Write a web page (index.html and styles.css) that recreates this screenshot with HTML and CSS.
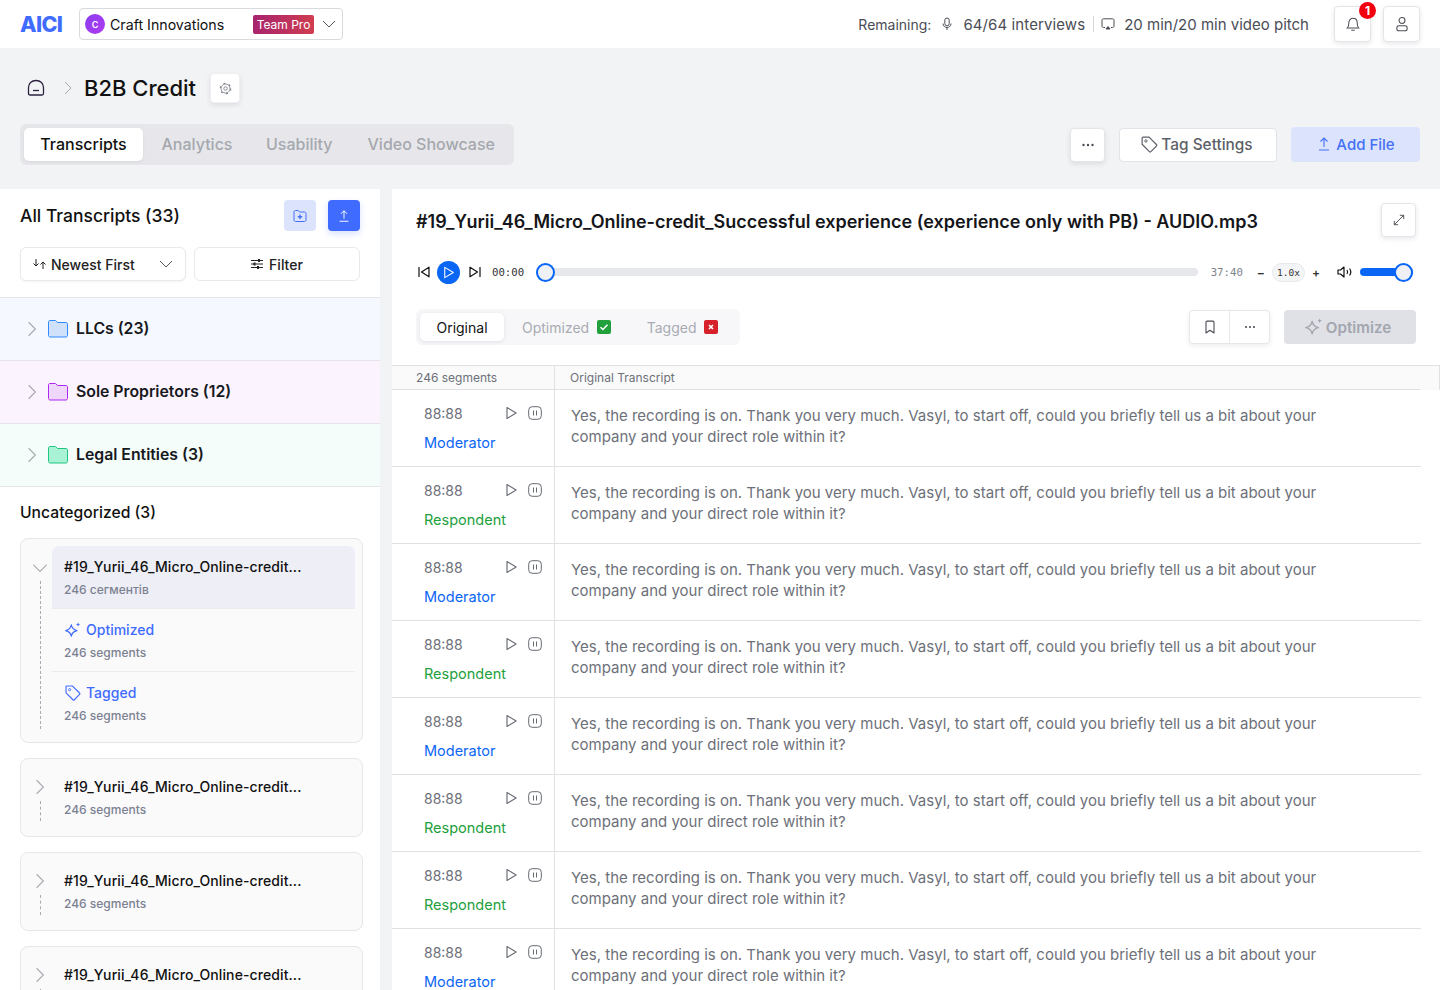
FILE: index.html
```html
<!DOCTYPE html>
<html lang="en">
<head>
    <meta charset="UTF-8">
    <title>B2B Credit - Transcripts</title>
    <link rel="stylesheet" href="styles.css">
</head>
<body>

<svg class="sprite" xmlns="http://www.w3.org/2000/svg">
    <defs>
        <symbol id="i-chev-r" viewBox="0 0 16 16"><path d="M5 2l6 6-6 6" fill="none" stroke="currentColor" stroke-width="1"/></symbol>
        <symbol id="i-chev-d" viewBox="0 0 16 16"><path d="M2 5l6 6 6-6" fill="none" stroke="currentColor" stroke-width="1"/></symbol>
        <symbol id="i-dots" viewBox="0 0 16 16"><circle cx="3.5" cy="8" r="1.2" fill="currentColor"/><circle cx="8" cy="8" r="1.2" fill="currentColor"/><circle cx="12.5" cy="8" r="1.2" fill="currentColor"/></symbol>
        <symbol id="i-tag" viewBox="0 0 16 16"><path d="M1.8 2.6c0-.5.4-.8.8-.8h5l6.2 6.2c.4.4.4 1 0 1.300l-4.600 4.700c-.4.4-1 .4-1.300 0L1.800 7.800z" fill="none" stroke="currentColor" stroke-width="1" stroke-linejoin="round"/><circle cx="5" cy="5" r="1" fill="none" stroke="currentColor" stroke-width=".8"/></symbol>
        <symbol id="i-upload" viewBox="0 0 16 16"><path d="M8 11V2M4.500 5.500L8 2l3.500 3.500M3 14h10" fill="none" stroke="currentColor" stroke-width="1.100"/></symbol>
        <symbol id="i-spark" viewBox="0 0 16 16"><path d="M6.500 3.500c.6 3 1.800 4.300 5 5-3.200.7-4.400 2-5 5-.6-3-1.800-4.300-5-5 3.200-.7 4.400-2 5-5z" fill="none" stroke="currentColor" stroke-width="1.100" stroke-linejoin="round"/><path d="M12.500 1c.2 1.300.7 1.800 2 2-1.300.2-1.800.7-2 2-.2-1.300-.7-1.800-2-2 1.300-.2 1.800-.7 2-2z" fill="currentColor"/></symbol>
        <symbol id="i-folder" viewBox="0 0 20 18"><path d="M.5 2C.5 1.200 1.200.5 2 .5h5.500l2 2H18c.8 0 1.500.7 1.500 1.500v11.500c0 .8-.7 1.500-1.500 1.500H2c-.8 0-1.500-.7-1.500-1.500z" fill="var(--folder-fill)" stroke="var(--folder-line)"/></symbol>
        <symbol id="i-play" viewBox="0 0 14 14"><path d="M3.500 2.200v9.600L11.500 7z" fill="none" stroke="currentColor" stroke-width="1" stroke-linejoin="round"/></symbol>
        <symbol id="i-pause" viewBox="0 0 14 14"><rect x=".7" y=".7" width="12.600" height="12.600" rx="3.500" fill="none" stroke="currentColor" stroke-width="1"/><path d="M5.500 4.500v5M8.500 4.500v5" stroke="currentColor" stroke-width="1"/></symbol>
    </defs>
</svg>

<header class="topbar">
    <div class="logo">AICI</div>
    <div class="workspace">
        <span class="workspace-avatar">C</span>
        <span class="workspace-name">Craft Innovations</span>
        <span class="plan-badge">Team Pro</span>
        <svg class="workspace-chev"><use href="#i-chev-d"/></svg>
    </div>
    <div class="usage">
        <span class="usage-label">Remaining:</span>
        <svg class="usage-icon" viewBox="0 0 14 14" fill="none" stroke="currentColor" stroke-width="1"><rect x="4.800" y="1" width="4.400" height="7.800" rx="2.200"/><path d="M3 6.500c0 5.300 8 5.300 8 0M7 10.500V13"/></svg>
        <span class="usage-value">64/64 interviews</span>
        <span class="usage-sep"></span>
        <svg class="usage-icon" viewBox="0 0 14 14" fill="none" stroke="currentColor" stroke-width="1"><path d="M4 10.500H2.500c-.8 0-1.500-.6-1.500-1.400V3.200c0-.8.7-1.400 1.500-1.400h9c.8 0 1.500.6 1.500 1.400v5.900c0 .8-.7 1.400-1.500 1.400H10"/><path d="M5 12h4L7 9.500z" fill="currentColor"/></svg>
        <span class="usage-value pitch">20 min/20 min video pitch</span>
    </div>
    <button class="icon-btn top-btn notif">
        <svg viewBox="0 0 14 14" fill="none" stroke="currentColor" stroke-width=".9"><path d="M2 10.500c1-1 1.300-2 1.300-4.200C3.300 3.600 5 2 7 2s3.700 1.600 3.700 4.300c0 2.200.3 3.200 1.300 4.200zM5.500 12.500h3"/></svg>
        <span class="notif-count">1</span>
    </button>
    <button class="icon-btn top-btn">
        <svg viewBox="0 0 14 14" fill="none" stroke="currentColor" stroke-width=".9"><circle cx="7" cy="4" r="2.600"/><rect x="2.500" y="8.500" width="9" height="4.500" rx="1.800"/></svg>
    </button>
</header>

<section class="project">
    <div class="crumbs">
        <svg class="home-icon" viewBox="0 0 18 18" fill="none" stroke="#2c2240" stroke-width="1.300"><path d="M1.500 8.500C1.500 4.500 4.500 1.500 9 1.500s7.500 3 7.500 7v6c0 1-.6 1.500-1.500 1.500H3c-.9 0-1.500-.5-1.500-1.500z"/><path d="M6 11.500h6"/></svg>
        <svg class="crumb-chev"><use href="#i-chev-r"/></svg>
        <h1 class="project-title">B2B Credit</h1>
        <button class="icon-btn gear-btn">
            <svg viewBox="0 0 14 14" fill="none" stroke="currentColor"><circle cx="7" cy="7" r="4.800" stroke-width=".9"/><circle cx="7" cy="7" r="5.700" stroke-width="1.100" stroke-dasharray="2.200 3.770"/><circle cx="7" cy="7" r="1.900" stroke-width=".9"/></svg>
        </button>
    </div>
    <div class="project-bar">
        <nav class="main-tabs">
            <span class="main-tab active">Transcripts</span>
            <span class="main-tab">Analytics</span>
            <span class="main-tab">Usability</span>
            <span class="main-tab">Video Showcase</span>
        </nav>
        <div class="project-actions">
            <button class="icon-btn dots-btn"><svg><use href="#i-dots"/></svg></button>
            <button class="tag-btn"><svg><use href="#i-tag"/></svg>Tag Settings</button>
            <button class="add-btn"><svg><use href="#i-upload"/></svg>Add File</button>
        </div>
    </div>
</section>

<main class="workspace-area">
    <aside class="sidebar">
        <div class="side-head">
            <h2 class="side-title">All Transcripts (33)</h2>
            <button class="square-btn soft">
                <svg viewBox="0 0 14 14" fill="none" stroke="currentColor" stroke-width="1"><path d="M1 3c0-.8.6-1.500 1.400-1.500h2.800l1.300 1.500h5c.8 0 1.500.7 1.500 1.500v6.500c0 .8-.7 1.500-1.500 1.500h-9C1.700 12.500 1 11.800 1 11z"/><path d="M7 5.500v4.500M4.800 7.700h4.400" stroke-width="1.400"/></svg>
            </button>
            <button class="square-btn solid"><svg><use href="#i-upload"/></svg></button>
        </div>
        <div class="side-filters">
            <button class="filter-btn sort">
                <svg class="sort-icon" viewBox="0 0 15 12" fill="none" stroke="currentColor" stroke-width="1"><path d="M4 1v7M1.500 5.500L4 8l2.500-2.500M11 11V4M8.500 6.500L11 4l2.500 2.500"/></svg>
                Newest First
                <svg class="sort-chev"><use href="#i-chev-d"/></svg>
            </button>
            <button class="filter-btn">
                <svg viewBox="0 0 12 12" fill="none" stroke="currentColor" stroke-width="1"><path d="M0 2.500h12M0 6h12M0 9.500h12"/><path d="M8 1v3M3.500 4.500v3M7 8v3" stroke-width="2"/></svg>
                Filter
            </button>
        </div>

        <div class="folder blue">
            <svg class="folder-chev"><use href="#i-chev-r"/></svg>
            <svg class="folder-icon"><use href="#i-folder"/></svg>
            <span>LLCs (23)</span>
        </div>
        <div class="folder purple">
            <svg class="folder-chev"><use href="#i-chev-r"/></svg>
            <svg class="folder-icon"><use href="#i-folder"/></svg>
            <span>Sole Proprietors (12)</span>
        </div>
        <div class="folder green">
            <svg class="folder-chev"><use href="#i-chev-r"/></svg>
            <svg class="folder-icon"><use href="#i-folder"/></svg>
            <span>Legal Entities (3)</span>
        </div>

        <h3 class="side-sub">Uncategorized (3)</h3>

        <div class="file-card open">
            <div class="file-rail">
                <svg class="file-chev"><use href="#i-chev-d"/></svg>
                <span class="rail-line"></span>
            </div>
            <div class="file-list">
                <div class="file-row selected">
                    <div class="file-name">#19_Yurii_46_Micro_Online-credit...</div>
                    <div class="file-meta">246 сегментів</div>
                </div>
                <div class="file-row">
                    <div class="file-name variant"><svg><use href="#i-spark"/></svg>Optimized</div>
                    <div class="file-meta">246 segments</div>
                </div>
                <div class="file-row">
                    <div class="file-name variant"><svg><use href="#i-tag"/></svg>Tagged</div>
                    <div class="file-meta">246 segments</div>
                </div>
            </div>
        </div>

        <div class="file-card">
            <div class="file-rail">
                <svg class="file-chev"><use href="#i-chev-r"/></svg>
                <span class="rail-line"></span>
            </div>
            <div class="file-row">
                <div class="file-name">#19_Yurii_46_Micro_Online-credit...</div>
                <div class="file-meta">246 segments</div>
            </div>
        </div>
        <div class="file-card">
            <div class="file-rail">
                <svg class="file-chev"><use href="#i-chev-r"/></svg>
                <span class="rail-line"></span>
            </div>
            <div class="file-row">
                <div class="file-name">#19_Yurii_46_Micro_Online-credit...</div>
                <div class="file-meta">246 segments</div>
            </div>
        </div>
        <div class="file-card">
            <div class="file-rail">
                <svg class="file-chev"><use href="#i-chev-r"/></svg>
                <span class="rail-line"></span>
            </div>
            <div class="file-row">
                <div class="file-name">#19_Yurii_46_Micro_Online-credit...</div>
                <div class="file-meta">246 segments</div>
            </div>
        </div>
    </aside>

    <section class="detail">
        <div class="detail-head">
            <h2 class="detail-title">#19_Yurii_46_Micro_Online-credit_Successful experience (experience only with PB) - AUDIO.mp3</h2>
            <button class="icon-btn expand-btn">
                <svg viewBox="0 0 14 14" fill="none" stroke="currentColor" stroke-width="1.100"><path d="M8 1.500h4.500V6M12.500 1.500l-11 11M1.500 8v4.500H6"/></svg>
            </button>
        </div>

        <div class="player">
            <svg class="skip" viewBox="0 0 14 14" fill="none" stroke="currentColor" stroke-width="1.200"><path d="M2 2v10M12 2.200v9.600L4.500 7z" stroke-linejoin="round"/></svg>
            <span class="play-btn"><svg><use href="#i-play"/></svg></span>
            <svg class="skip" viewBox="0 0 14 14" fill="none" stroke="currentColor" stroke-width="1.200"><path d="M12 2v10M2 2.200v9.600L9.500 7z" stroke-linejoin="round"/></svg>
            <span class="time now">00:00</span>
            <div class="track"><span class="knob"></span></div>
            <span class="time total">37:40</span>
            <span class="speed-step">−</span>
            <span class="speed">1.0x</span>
            <span class="speed-step">+</span>
            <svg class="volume-icon" viewBox="0 0 16 14" fill="none" stroke="currentColor" stroke-width="1.200"><path d="M1 5v4h2.500L7 12V2L3.500 5z" stroke-linejoin="round"/><path d="M10 5c.8 1.200.8 2.800 0 4M12.500 3.500c1.500 2 1.500 5 0 7"/></svg>
            <div class="volume"><span class="knob"></span></div>
        </div>

        <div class="detail-bar">
            <div class="version-tabs">
                <span class="version-tab active">Original</span>
                <span class="version-tab">Optimized<i class="state ok"><svg viewBox="0 0 14 14" fill="none" stroke="#fff" stroke-width="1.500"><path d="M3.500 7.200l2.400 2.300 4.600-4.800"/></svg></i></span>
                <span class="version-tab">Tagged<i class="state bad"><svg viewBox="0 0 14 14" fill="none" stroke="#fff" stroke-width="1.600"><path d="M5 5l4 4M9 5l-4 4"/></svg></i></span>
            </div>
            <div class="bar-actions">
                <div class="btn-group">
                    <button><svg viewBox="0 0 14 14" fill="none" stroke="currentColor" stroke-width="1.100"><path d="M3 2.300c0-.7.5-1.200 1.200-1.200h5.600c.7 0 1.200.5 1.200 1.200V13L7 10.200 3 13z" stroke-linejoin="round"/></svg></button>
                    <button><svg><use href="#i-dots"/></svg></button>
                </div>
                <button class="optimize-btn"><svg><use href="#i-spark"/></svg>Optimize</button>
            </div>
        </div>

        <div class="seg-head">
            <div class="seg-left">246 segments</div>
            <div class="seg-right">Original Transcript</div>
        </div>

        <div class="seg">
            <div class="seg-left">
                <div class="seg-time"><span>88:88</span><svg class="seg-play"><use href="#i-play"/></svg><svg class="seg-pause"><use href="#i-pause"/></svg></div>
                <div class="speaker mod">Moderator</div>
            </div>
            <div class="seg-right">Yes, the recording is on. Thank you very much. Vasyl, to start off, could you briefly tell us a bit about your company and your direct role within it?</div>
        </div>
        <div class="seg">
            <div class="seg-left">
                <div class="seg-time"><span>88:88</span><svg class="seg-play"><use href="#i-play"/></svg><svg class="seg-pause"><use href="#i-pause"/></svg></div>
                <div class="speaker resp">Respondent</div>
            </div>
            <div class="seg-right">Yes, the recording is on. Thank you very much. Vasyl, to start off, could you briefly tell us a bit about your company and your direct role within it?</div>
        </div>
        <div class="seg">
            <div class="seg-left">
                <div class="seg-time"><span>88:88</span><svg class="seg-play"><use href="#i-play"/></svg><svg class="seg-pause"><use href="#i-pause"/></svg></div>
                <div class="speaker mod">Moderator</div>
            </div>
            <div class="seg-right">Yes, the recording is on. Thank you very much. Vasyl, to start off, could you briefly tell us a bit about your company and your direct role within it?</div>
        </div>
        <div class="seg">
            <div class="seg-left">
                <div class="seg-time"><span>88:88</span><svg class="seg-play"><use href="#i-play"/></svg><svg class="seg-pause"><use href="#i-pause"/></svg></div>
                <div class="speaker resp">Respondent</div>
            </div>
            <div class="seg-right">Yes, the recording is on. Thank you very much. Vasyl, to start off, could you briefly tell us a bit about your company and your direct role within it?</div>
        </div>
        <div class="seg">
            <div class="seg-left">
                <div class="seg-time"><span>88:88</span><svg class="seg-play"><use href="#i-play"/></svg><svg class="seg-pause"><use href="#i-pause"/></svg></div>
                <div class="speaker mod">Moderator</div>
            </div>
            <div class="seg-right">Yes, the recording is on. Thank you very much. Vasyl, to start off, could you briefly tell us a bit about your company and your direct role within it?</div>
        </div>
        <div class="seg">
            <div class="seg-left">
                <div class="seg-time"><span>88:88</span><svg class="seg-play"><use href="#i-play"/></svg><svg class="seg-pause"><use href="#i-pause"/></svg></div>
                <div class="speaker resp">Respondent</div>
            </div>
            <div class="seg-right">Yes, the recording is on. Thank you very much. Vasyl, to start off, could you briefly tell us a bit about your company and your direct role within it?</div>
        </div>
        <div class="seg">
            <div class="seg-left">
                <div class="seg-time"><span>88:88</span><svg class="seg-play"><use href="#i-play"/></svg><svg class="seg-pause"><use href="#i-pause"/></svg></div>
                <div class="speaker resp">Respondent</div>
            </div>
            <div class="seg-right">Yes, the recording is on. Thank you very much. Vasyl, to start off, could you briefly tell us a bit about your company and your direct role within it?</div>
        </div>
        <div class="seg">
            <div class="seg-left">
                <div class="seg-time"><span>88:88</span><svg class="seg-play"><use href="#i-play"/></svg><svg class="seg-pause"><use href="#i-pause"/></svg></div>
                <div class="speaker mod">Moderator</div>
            </div>
            <div class="seg-right">Yes, the recording is on. Thank you very much. Vasyl, to start off, could you briefly tell us a bit about your company and your direct role within it?</div>
        </div>
    </section>
</main>

</body>
</html>
```

FILE: styles.css
```css
* {
    box-sizing: border-box;
}
html, body {
    height: 990px;
    overflow: hidden;
}
body {
    margin: 0;
    font-family: Inter, "Noto Sans", sans-serif;
    background: #f2f3f5;
    color: #111;
}
button {
    font-family: inherit;
    cursor: pointer;
}
h1, h2, h3 {
    margin: 0;
}
.sprite {
    position: absolute;
    width: 0;
    height: 0;
}

/* top bar */
.topbar {
    height: 48px;
    background: #fff;
    display: flex;
    align-items: center;
    padding: 0 20px;
}
.logo {
    font-size: 21.500px;
    font-weight: 800;
    letter-spacing: -0.6px;
    color: #3f6bff;
    width: 59px;
}
.workspace {
    width: 264px;
    height: 32px;
    border: 1px solid #d9dade;
    border-radius: 4px;
    display: flex;
    align-items: center;
    padding: 0 5px;
}
.workspace-avatar {
    width: 20px;
    height: 20px;
    border-radius: 50%;
    background: linear-gradient(135deg, #8a3cf0, #b03cf2);
    color: #fff;
    font-size: 9px;
    font-weight: 600;
    display: flex;
    align-items: center;
    justify-content: center;
    margin-right: 5px;
}
.workspace-name {
    font-size: 14.200px;
    width: 143px;
}
.plan-badge {
    width: 61px;
    height: 19px;
    background: linear-gradient(90deg, #a8246f, #cf3d50);
    border-radius: 2px;
    color: #fff;
    font-size: 12px;
    line-height: 19px;
    text-align: center;
}
.workspace-chev {
    width: 16px;
    height: 16px;
    margin-left: 7px;
    color: #555;
}
.usage {
    margin-left: auto;
    display: flex;
    align-items: center;
    color: #4a4d55;
    margin-right: 13px;
}
.usage-label {
    font-size: 14px;
    margin-right: 9px;
}
.usage-icon {
    width: 14px;
    height: 14px;
    margin-right: 9px;
}
.usage-value {
    font-size: 15px;
    letter-spacing: 0.1px;
}
.usage-value.pitch {
    letter-spacing: 0;
}
.usage-sep {
    width: 1px;
    height: 16px;
    background: #d4d6dc;
    margin: 0 7px 0 8px;
}
.icon-btn {
    background: #fff;
    border: 1px solid #e4e5e9;
    border-radius: 4px;
    box-shadow: 0 2px 5px rgba(30, 35, 60, 0.1);
    color: #4a4d55;
    display: flex;
    align-items: center;
    justify-content: center;
    padding: 0;
}
.top-btn {
    width: 37px;
    height: 36px;
    margin-left: 12px;
    position: relative;
}
.top-btn svg {
    width: 16px;
    height: 16px;
}
.notif-count {
    position: absolute;
    top: -5px;
    right: -6px;
    width: 17px;
    height: 17px;
    border-radius: 50%;
    background: #f2000f;
    color: #fff;
    font-size: 12px;
    font-weight: 700;
    line-height: 17px;
    text-align: center;
}

/* project header */
.project {
    height: 141px;
    padding: 25px 20px 0;
}
.crumbs {
    display: flex;
    align-items: center;
    height: 30px;
}
.home-icon {
    width: 18px;
    height: 18px;
    margin-left: 7px;
}
.crumb-chev {
    width: 16px;
    height: 16px;
    margin-left: 15px;
    color: #a6a8af;
}
.project-title {
    font-size: 22px;
    font-weight: 500;
    margin-left: 8px;
}
.gear-btn {
    width: 30px;
    height: 30px;
    margin-left: 14px;
    border-color: #f0f0f3;
    color: #7a7d85;
}
.gear-btn svg {
    width: 13px;
    height: 13px;
}
.project-bar {
    display: flex;
    justify-content: space-between;
    align-items: center;
    margin-top: 21px;
}
.main-tabs {
    width: 494px;
    height: 41px;
    background: #e7e7eb;
    border-radius: 6px;
    display: flex;
    align-items: center;
    padding: 0 4px;
}
.main-tab {
    flex: none;
    font-size: 16px;
    font-weight: 500;
    color: #a5a7ae;
    padding: 0 17.500px;
    line-height: 33px;
    white-space: nowrap;
}
.main-tab.active {
    background: #fff;
    color: #111;
    border-radius: 5px;
    box-shadow: 0 1px 3px rgba(30, 35, 60, 0.08);
    width: 119px;
    padding: 0;
    text-align: center;
}
.main-tab.active + .main-tab {
    margin: 0 -1.500px 0 1px;
}
.project-actions {
    display: flex;
    align-items: center;
}
.dots-btn {
    width: 35px;
    height: 34px;
}
.dots-btn svg {
    width: 16px;
    height: 16px;
}
.tag-btn {
    width: 158px;
    height: 34px;
    margin-left: 14px;
    padding: 0 3px 1px 0;
    background: #fff;
    border: 1px solid #e2e3e8;
    border-radius: 4px;
    font-size: 15.400px;
    font-weight: 500;
    color: #5c5f68;
    display: flex;
    align-items: center;
    justify-content: center;
    gap: 2px;
}
.tag-btn svg {
    width: 19px;
    height: 19px;
}
.add-btn {
    width: 129px;
    height: 35px;
    margin-left: 14px;
    padding: 0 0 1px;
    background: #dce4fd;
    border: none;
    border-radius: 4px;
    font-size: 15px;
    font-weight: 500;
    color: #4470f5;
    display: flex;
    align-items: center;
    justify-content: center;
    gap: 4px;
}
.add-btn svg {
    width: 16px;
    height: 16px;
}

/* layout below header */
.workspace-area {
    display: flex;
    gap: 12px;
    height: 801px;
}

/* left column */
.sidebar {
    width: 380px;
    flex: none;
    background: #fff;
    overflow: hidden;
}
.side-head {
    display: flex;
    align-items: center;
    height: 53px;
    margin-bottom: 5px;
    padding: 0 20px;
    gap: 12px;
}
.side-title {
    font-size: 17.500px;
    font-weight: 500;
    margin-right: auto;
}
.square-btn {
    width: 32px;
    height: 31px;
    border: none;
    border-radius: 4px;
    padding: 0;
    display: flex;
    align-items: center;
    justify-content: center;
}
.square-btn svg {
    width: 14px;
    height: 14px;
}
.square-btn.soft {
    background: #dce4fd;
    color: #4470f5;
}
.square-btn.solid {
    background: #3f6bff;
    color: #fff;
    box-shadow: 0 3px 6px rgba(63, 107, 255, 0.2);
}
.side-filters {
    display: flex;
    gap: 8px;
    padding: 0 20px;
    height: 50px;
}
.filter-btn {
    flex: 0 0 166px;
    height: 34px;
    background: #fff;
    border: 1px solid #e8e9ec;
    border-radius: 6px;
    font-size: 14px;
    font-weight: 500;
    color: #222;
    display: flex;
    align-items: center;
    justify-content: center;
    gap: 6px;
}
.filter-btn svg {
    width: 12px;
    height: 12px;
}
.filter-btn.sort {
    justify-content: flex-start;
    padding: 0 11px;
    gap: 4px;
    box-shadow: 0 1px 2px rgba(30, 35, 60, 0.05);
}
.filter-btn .sort-icon {
    width: 15px;
}
.filter-btn .sort-chev {
    width: 16px;
    height: 16px;
    margin-left: auto;
    color: #555;
}
.folder {
    height: 63px;
    display: flex;
    align-items: center;
    padding: 0 0 1px 23px;
    border-top: 1px solid #e3e5ea;
    font-size: 15.800px;
    font-weight: 600;
    color: #17181c;
}
.folder.blue {
    background: #f5f8ff;
    --folder-fill: #d0e2fb;
    --folder-line: #2f8bff;
}
.folder.purple {
    background: #fbf4fe;
    --folder-fill: #efd6fb;
    --folder-line: #b026f2;
}
.folder.green {
    background: #f4fdf9;
    --folder-fill: #a9f2d5;
    --folder-line: #1fc77e;
    border-bottom: 1px solid #e3e5ea;
    height: 64px;
}
.folder-chev {
    width: 18px;
    height: 18px;
    color: #a6a8af;
}
.folder-icon {
    width: 20px;
    height: 18px;
    margin: 0 8px 0 7px;
}
.side-sub {
    font-size: 15.700px;
    font-weight: 500;
    padding: 16px 20px 0;
    line-height: 19px;
    height: 51px;
}
.file-card {
    width: 343px;
    margin: 0 0 15px 20px;
    display: flex;
    background: #fafafb;
    border: 1px solid #e6e7ea;
    border-radius: 8px;
    padding: 7px 7px 0 0;
    height: 79px;
}
.file-card.open {
    height: 205px;
}
.file-rail {
    width: 31px;
    flex: none;
    position: relative;
}
.file-chev {
    position: absolute;
    top: 12px;
    left: 10px;
    width: 18px;
    height: 18px;
    color: #a9abb2;
}
.open .file-chev {
    top: 13px;
    left: 10px;
}
.rail-line {
    position: absolute;
    top: 35px;
    left: 19px;
    height: 20px;
    border-left: 1px dashed #a9abb2;
}
.open .rail-line {
    height: 148px;
}
.file-list {
    flex: 1;
}
.file-row {
    height: 63px;
    padding: 12px 12px 0;
    border-bottom: 1px solid #eaebee;
}
.file-card > .file-row {
    border-bottom: none;
    padding-top: 12px;
}
.file-row:last-child {
    border-bottom: none;
}
.file-row.selected {
    background: #edeef6;
    border-radius: 7px 7px 0 0;
}
.file-name {
    font-size: 14px;
    font-weight: 500;
    letter-spacing: 0.1px;
    color: #111;
    line-height: 18px;
    display: flex;
    align-items: center;
    white-space: nowrap;
}
.file-name.variant {
    color: #3f6bff;
    letter-spacing: 0;
    gap: 4px;
}
.file-name svg {
    width: 18px;
    height: 18px;
}
.file-meta {
    font-size: 12px;
    font-weight: 500;
    color: #7c8192;
    line-height: 15px;
    margin-top: 6px;
}

/* right column */
.detail {
    flex: 1;
    min-width: 0;
    background: #fff;
    overflow: hidden;
}
.detail-head {
    display: flex;
    align-items: center;
    justify-content: space-between;
    height: 66px;
    padding: 0 24px 2px;
}
.detail-title {
    font-size: 18px;
    font-weight: 600;
    color: #15161a;
    white-space: nowrap;
}
.expand-btn {
    width: 35px;
    height: 34px;
    margin-top: -3px;
}
.expand-btn svg {
    width: 12px;
    height: 12px;
}
.player {
    display: flex;
    align-items: center;
    height: 34px;
    padding: 0 24px;
}
.skip {
    width: 14px;
    height: 14px;
    margin-left: 1px;
}
.play-btn {
    width: 23px;
    height: 23px;
    margin: 0 7px 0 6px;
    border-radius: 50%;
    background: #0a66f5;
    color: #fff;
    display: flex;
    align-items: center;
    justify-content: center;
}
.play-btn svg {
    width: 15px;
    height: 15px;
}
.time {
    font-family: "DejaVu Sans Mono", "Liberation Mono", monospace;
    font-size: 10.700px;
    color: #333;
}
.time.now {
    margin-left: 10px;
    width: 44px;
}
.time.total {
    margin-left: 13px;
    color: #80838c;
}
.track {
    flex: 1;
    height: 8px;
    background: #e6e8eb;
    border-radius: 4px;
    position: relative;
}
.knob {
    position: absolute;
    top: 50%;
    left: 0;
    width: 19px;
    height: 19px;
    margin-top: -9.500px;
    border-radius: 50%;
    background: #eff1f5;
    border: 2px solid #0a66f5;
}
.speed-step {
    font-size: 12px;
    font-weight: 600;
    color: #333;
    margin: 0 7px 0 14px;
}
.speed-step + .speed + .speed-step {
    margin: 0 0 0 7px;
}
.speed {
    font-family: "DejaVu Sans Mono", "Liberation Mono", monospace;
    font-size: 9.500px;
    color: #333;
    width: 33px;
    height: 19px;
    line-height: 17px;
    text-align: center;
    background: #f4f5f7;
    border: 1px solid #e8e9ec;
    border-radius: 10px;
}
.volume-icon {
    width: 16px;
    height: 14px;
    margin: 0 7px 0 17px;
}
.volume {
    width: 53px;
    height: 8px;
    background: #0a66f5;
    border-radius: 4px;
    position: relative;
    margin-right: 3px;
}
.volume .knob {
    left: auto;
    right: 0;
}
.detail-bar {
    display: flex;
    justify-content: space-between;
    align-items: center;
    height: 77px;
    padding: 0 24px;
    border-bottom: 1px solid #e0e1e5;
}
.version-tabs {
    width: 324px;
    height: 36px;
    background: #f7f7f9;
    border-radius: 6px;
    display: flex;
    align-items: center;
    padding: 0 4px;
}
.version-tab {
    flex: none;
    font-size: 14px;
    color: #a9abb2;
    display: flex;
    align-items: center;
    gap: 8px;
    margin-left: 18px;
    margin-right: 17.500px;
}
.version-tab.active {
    background: #fff;
    color: #111;
    width: 84px;
    height: 28px;
    margin: 0;
    justify-content: center;
    border-radius: 5px;
    box-shadow: 0 1px 4px rgba(30, 35, 60, 0.1);
}
.state {
    width: 14px;
    height: 14px;
    border-radius: 2px;
    display: block;
}
.state svg {
    display: block;
    width: 14px;
    height: 14px;
}
.state.ok {
    background: #22a03c;
}
.state.bad {
    background: #d6212b;
}
.bar-actions {
    display: flex;
    gap: 14px;
}
.btn-group {
    display: flex;
    width: 81px;
    height: 34px;
    background: #fff;
    border: 1px solid #e6e7ea;
    border-radius: 4px;
    box-shadow: 0 2px 5px rgba(30, 35, 60, 0.08);
}
.btn-group button {
    flex: 1;
    background: none;
    border: none;
    padding: 0;
    color: #4a4d55;
    display: flex;
    align-items: center;
    justify-content: center;
}
.btn-group button + button {
    border-left: 1px solid #e6e7ea;
}
.btn-group svg {
    width: 14px;
    height: 14px;
}
.optimize-btn {
    width: 132px;
    height: 34px;
    background: #dfe1e7;
    border: none;
    border-radius: 4px;
    font-size: 15.200px;
    font-weight: 600;
    color: #a3a6ae;
    display: flex;
    align-items: center;
    justify-content: center;
    gap: 2px;
    padding: 0 5px 0 0;
}
.optimize-btn svg {
    width: 20px;
    height: 20px;
}

/* segments */
.seg-left {
    width: 163px;
    flex: none;
    border-right: 1px solid #e0e1e5;
}
.seg-right {
    flex: 1;
    margin-right: 19px;
    padding: 15px 91px 0 16px;
    font-size: 15px;
    line-height: 21px;
    color: #6d7079;
    border-bottom: 1px solid #e0e1e5;
}
.seg-head {
    display: flex;
    height: 24px;
    background: #fafafa;
    border-right: 1px solid #e0e1e5;
    font-size: 12px;
    line-height: 24px;
    color: #6d7079;
}
.seg-head .seg-left {
    padding-left: 24px;
    border-bottom: 1px solid #e0e1e5;
}
.seg-head .seg-right {
    padding: 0 0 0 15px;
    font-size: 12px;
    line-height: 24px;
}
.seg {
    display: flex;
    height: 77px;
}
.seg .seg-left {
    padding: 13px 12px 0 32px;
    border-bottom: 1px solid #e0e1e5;
}
.seg-time {
    display: flex;
    align-items: center;
    font-size: 14px;
    color: #6d7079;
    height: 20px;
}
.seg-time span {
    margin-right: auto;
}
.seg-play {
    width: 16px;
    height: 16px;
    color: #666a72;
    margin-top: -1px;
}
.seg-pause {
    width: 14px;
    height: 14px;
    color: #666a72;
    margin: -1px 0 0 9px;
}
.speaker {
    font-size: 14.500px;
    margin-top: 10px;
    line-height: 20px;
}
.speaker.mod {
    color: #0a66f5;
}
.speaker.resp {
    color: #22a03c;
}
```
